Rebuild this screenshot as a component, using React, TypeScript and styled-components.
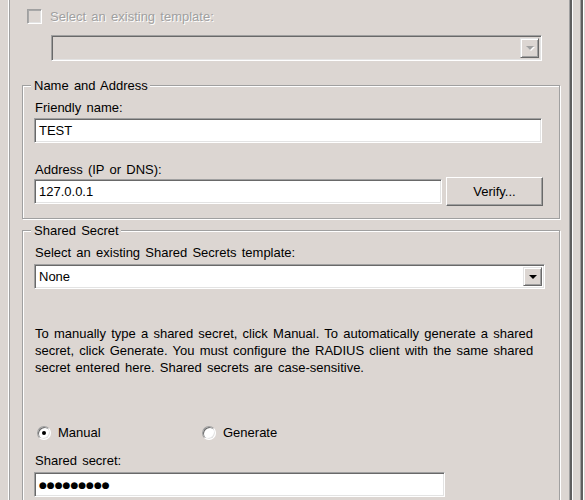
import React from "react";
import styled, { createGlobalStyle } from "styled-components";

const BG = "#dcd6d2";

const GlobalStyle = createGlobalStyle`
  html, body { margin: 0; padding: 0; }
  body {
    background: ${BG};
    font-family: "Liberation Sans", Arial, sans-serif;
    font-size: 13px;
    word-spacing: 1.6px;
    color: #000;
  }
`;

const Window = styled.div`
  display: flex;
  width: 585px;
  height: 500px;
  overflow: hidden;
  background: ${BG};
`;

const LeftGutter = styled.div`
  flex: none;
  width: 10px;
  box-sizing: border-box;
  border-right: 1px solid #a0a0a0;
  box-shadow: inset -1px 0 0 #fff;
`;

const Main = styled.div`
  flex: none;
  width: 559px;
  box-sizing: border-box;
  padding: 9px 0 0 12px;
  display: flex;
  flex-direction: column;
`;

const RightFrame = styled.div`
  flex: none;
  width: 16px;
  display: flex;
  gap: 7px;
`;

const FrameBar = styled.div`
  flex: none;
  width: 4px;
  background: linear-gradient(
    to right,
    #a0a0a0 0 1px,
    #5f5f5f 1px 3px,
    #ffffff 3px 4px
  );
`;

const FrameTail = styled.div`
  flex: none;
  width: 1px;
  display: flex;
  flex-direction: column;
`;

const Accent = styled.div`
  margin-top: 40px;
  height: 6px;
  background: #4a4a86;
`;

const TemplateRow = styled.label`
  display: flex;
  align-items: center;
  gap: 8px;
  height: 15px;
  margin-left: 5px;
  color: #a0a0a0;
  text-shadow: 1px 1px 0 #fff;
`;

const CheckBox = styled.span`
  flex: none;
  width: 15px;
  height: 15px;
  box-sizing: border-box;
  border: 1px solid;
  border-color: #a0a0a0 #fff #fff #a0a0a0;
  box-shadow: inset 1px 1px 0 #a8a8a8, inset -1px -1px 0 #e3e3e3;
`;

const Combo = styled.div<{ $disabled?: boolean; $width: number; $height?: number }>`
  flex: none;
  display: flex;
  align-items: stretch;
  box-sizing: border-box;
  width: ${(p) => p.$width}px;
  height: ${(p) => p.$height ?? 25}px;
  padding: 2px;
  border: 1px solid;
  border-color: #a0a0a0 #fff #fff #a0a0a0;
  box-shadow: inset 1px 1px 0 #696969, inset -1px -1px 0 #e3e3e3;
  background: ${(p) => (p.$disabled ? BG : "#fff")};
`;

const ComboValue = styled.span`
  flex: 1;
  display: flex;
  align-items: center;
  padding-left: 2px;
  white-space: nowrap;
`;

const DropButton = styled.span`
  flex: none;
  width: 19px;
  box-sizing: border-box;
  display: flex;
  align-items: center;
  justify-content: center;
  background: ${BG};
  border: 1px solid;
  border-color: #e3e3e3 #696969 #696969 #e3e3e3;
  box-shadow: inset 1px 1px 0 #fff, inset -1px -1px 0 #a0a0a0;
`;

const Arrow = styled.span<{ $disabled?: boolean }>`
  width: 0;
  height: 0;
  border-left: 4px solid transparent;
  border-right: 4px solid transparent;
  border-top: 4px solid ${(p) => (p.$disabled ? "#a0a0a0" : "#000")};
  filter: ${(p) => (p.$disabled ? "drop-shadow(1px 1px 0 #fff)" : "none")};
`;

const TemplateCombo = styled(Combo)`
  margin-top: 11px;
  margin-left: 29px;
`;

const Group = styled.fieldset<{ $gapTop?: number }>`
  margin: ${(p) => p.$gapTop ?? 0}px 0 0 0;
  width: 538px;
  box-sizing: border-box;
  border: 1px solid #a0a0a0;
  box-shadow: inset 1px 1px 0 #fff, 1px 1px 0 #fff;
  padding: 7px 0 12px 11px;
  display: flex;
  flex-direction: column;
  min-width: 0;
`;

const Legend = styled.legend`
  padding: 0 2px 0 3px;
  margin-left: -3px;
  line-height: 15px;
  background: ${BG};
`;

const FieldLabel = styled.div<{ $gapTop?: number }>`
  line-height: 15px;
  height: 15px;
  margin-top: ${(p) => p.$gapTop ?? 0}px;
  padding-left: 1px;
  white-space: nowrap;
`;

const TextBox = styled.div<{ $width: number; $gapTop?: number }>`
  flex: none;
  box-sizing: border-box;
  width: ${(p) => p.$width}px;
  height: 25px;
  margin-top: ${(p) => p.$gapTop ?? 0}px;
  display: flex;
  align-items: center;
  padding-left: 4px;
  background: #fff;
  border: 1px solid;
  border-color: #a0a0a0 #fff #fff #a0a0a0;
  box-shadow: inset 1px 1px 0 #696969, inset -1px -1px 0 #e3e3e3;
  white-space: nowrap;
`;

const AddressRow = styled.div`
  display: flex;
  align-items: center;
  gap: 4px;
`;

const Button = styled.button`
  flex: none;
  width: 97px;
  height: 29px;
  box-sizing: border-box;
  padding: 0;
  font: inherit;
  word-spacing: inherit;
  color: #000;
  background: ${BG};
  border: 1px solid;
  border-color: #fff #696969 #696969 #fff;
  box-shadow: inset -1px -1px 0 #a0a0a0;
`;

const ComboSpacer = styled.div`
  margin-top: 4px;
`;

const Para = styled.p`
  margin: 36px 0 0 1px;
  line-height: 17px;
  white-space: nowrap;
`;

const RadioGroup = styled.div`
  display: grid;
  grid-template-columns: 165px auto;
  margin: 49px 0 0 3px;
`;

const RadioOption = styled.label`
  display: flex;
  align-items: center;
  gap: 7px;
  height: 15px;
`;

const RadioCircle = styled.span<{ $checked?: boolean }>`
  flex: none;
  width: 14px;
  height: 14px;
  box-sizing: border-box;
  border-radius: 50%;
  display: flex;
  align-items: center;
  justify-content: center;
  background: #fff;
  border: 1px solid;
  border-color: #a0a0a0 #fff #fff #a0a0a0;
  box-shadow: inset 1px 1px 0 #696969, inset -1px -1px 0 #e3e3e3;
  &::after {
    content: "";
    display: ${(p) => (p.$checked ? "block" : "none")};
    width: 4px;
    height: 4px;
    border-radius: 50%;
    background: #000;
  }
`;

const Dots = styled.span`
  font-family: "DejaVu Sans", sans-serif;
  font-size: 9px;
  word-spacing: 0;
`;

export default function App() {
  return (
    <>
      <GlobalStyle />
      <Window>
        <LeftGutter />
        <Main>
          <TemplateRow>
            <CheckBox />
            Select an existing template:
          </TemplateRow>
          <TemplateCombo $disabled $width={491} $height={26}>
            <ComboValue />
            <DropButton>
              <Arrow $disabled />
            </DropButton>
          </TemplateCombo>

          <Group $gapTop={17}>
            <Legend>Name and Address</Legend>
            <FieldLabel>Friendly name:</FieldLabel>
            <TextBox $width={508} $gapTop={3}>TEST</TextBox>
            <FieldLabel $gapTop={19}>Address (IP or DNS):</FieldLabel>
            <AddressRow>
              <TextBox $width={408}>127.0.0.1</TextBox>
              <Button type="button">Verify...</Button>
            </AddressRow>
          </Group>

          <Group $gapTop={4}>
            <Legend>Shared Secret</Legend>
            <FieldLabel>Select an existing Shared Secrets template:</FieldLabel>
            <ComboSpacer>
              <Combo $width={511}>
                <ComboValue>None</ComboValue>
                <DropButton>
                  <Arrow />
                </DropButton>
              </Combo>
            </ComboSpacer>
            <Para>
              To manually type a shared secret, click Manual. To automatically generate a shared
              <br />
              secret, click Generate. You must configure the RADIUS client with the same shared
              <br />
              secret entered here. Shared secrets are case-sensitive.
            </Para>
            <RadioGroup>
              <RadioOption>
                <RadioCircle $checked />
                Manual
              </RadioOption>
              <RadioOption>
                <RadioCircle />
                Generate
              </RadioOption>
            </RadioGroup>
            <FieldLabel $gapTop={13}>Shared secret:</FieldLabel>
            <TextBox $width={411} $gapTop={4}>
              <Dots>●●●●●●●●●</Dots>
            </TextBox>
          </Group>
        </Main>
        <RightFrame>
          <FrameBar />
          <FrameBar />
          <FrameTail>
            <Accent />
          </FrameTail>
        </RightFrame>
      </Window>
    </>
  );
}
